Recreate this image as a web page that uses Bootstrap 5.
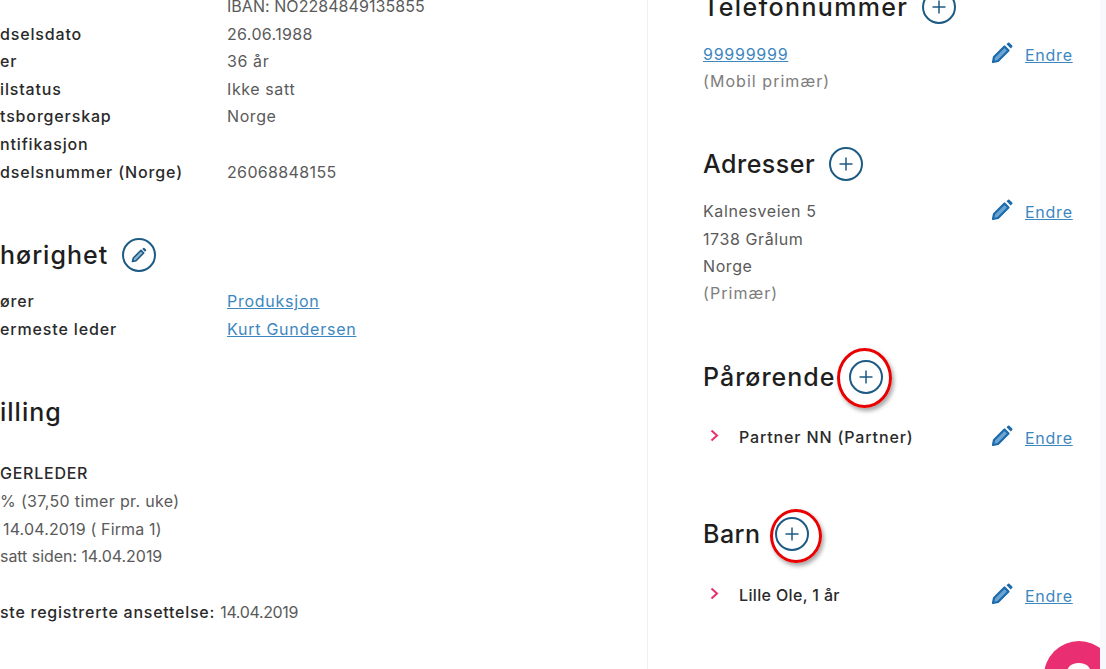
<!DOCTYPE html>
<html lang="no">
<head>
<meta charset="utf-8">
<title>Ansatt</title>
<link href="https://cdn.jsdelivr.net/npm/bootstrap@5.3.0/dist/css/bootstrap.min.css" rel="stylesheet">
<style>
html,body{height:100%;overflow:hidden;background:#fff}
body{font-family:Inter,"Open Sans",sans-serif;font-size:16px;line-height:27.6px;color:#5a5a5a;letter-spacing:.6px}
.stage{height:669px;overflow:hidden}
.pane-left{width:648px;border-right:1px solid #f0f0f0;margin-top:-7px}
.pane-right{width:452px;padding-left:55px;padding-right:27px;margin-top:-13px}
.edge-strip{width:6px;background:#f6f8fb;z-index:3}
.lbl{width:227px;color:#2a2a2a;font-weight:500;flex:none;letter-spacing:.85px}
.head-row{display:flex;align-items:center;gap:14px}
.sec-title{font-size:25px;line-height:40px;font-weight:500;color:#1e1e1e;margin:0;letter-spacing:1px}
.title-wide{letter-spacing:1.35px}
.title-snug{letter-spacing:.5px}
.sec-gap{margin-top:49px}
.gap-s{margin-top:14px}
.gap-k{margin-top:13px}
.gap-m{margin-top:27px}
.gap-n{margin-top:28px}
.gap-l{margin-top:62px}
.strong-line{color:#2a2a2a;font-weight:500;letter-spacing:.75px}
.ind{padding-left:3px}
.num{letter-spacing:.35px}
.tight{letter-spacing:.05px}
.tight-a{letter-spacing:.15px}
.tight-b{letter-spacing:-.05px}
.nar{letter-spacing:-.35px}
.lnk{color:#3d87bf;text-decoration:underline;letter-spacing:.75px}
.muted-line{color:#7d7d7d;letter-spacing:1.05px;margin-top:-1px}
.round-ic{width:34px;height:34px;flex:none;display:block}
.ring-host{position:relative;display:block;flex:none}
.ring{position:absolute;border:3px solid #e90000;border-radius:50%;box-shadow:2px 3px 4px rgba(0,0,0,.35)}
.ring-a{width:55px;height:60px;left:-12px;top:-12px}
.ring-b{width:52px;height:54px;left:-5px;top:-8px}
.edit-col{width:82px;flex:none;display:flex;align-items:flex-start;gap:12px;padding-top:1px}
.edit-col svg{width:22px;height:22px;flex:none}
.chev{width:9px;height:13px;margin:5px 20px 0 7px;flex:none}
.dep-name{color:#2a2a2a;font-weight:500;letter-spacing:.85px}
.dep-short{letter-spacing:.35px}
.fab{position:absolute;left:1044px;top:641px;width:70px;height:70px;border-radius:50%;background:#e92f72;color:#fff;font-weight:700;font-size:50px;line-height:80px;text-align:center;z-index:2;letter-spacing:0}
</style>
</head>
<body>
<svg width="0" height="0" class="position-absolute">
  <defs>
    <symbol id="pen" viewBox="0 0 22 22"><path d="M2 20l1-5L13.500 4.500l4 4L7 19z" fill="#6ba4d2" stroke="#1a6aac" stroke-width="2.200" stroke-linejoin="round"/><path d="M15.500 2.200 17 .8a1 1 0 0 1 1.400 0l2.800 2.800a1 1 0 0 1 0 1.400L19.800 6.500z" fill="#1a6aac"/></symbol>
    <symbol id="plus" viewBox="0 0 34 34"><circle cx="17" cy="17" r="16" fill="none" stroke="#1d5b84" stroke-width="2"/><path d="M17 10.500v13M10.500 17h13" stroke="#1d5b84" stroke-width="1.500" fill="none"/></symbol>
    <symbol id="penring" viewBox="0 0 34 34"><circle cx="17" cy="17" r="16" fill="none" stroke="#1d5b84" stroke-width="2"/><path d="M10.500 23.500l.8-3.500 7.700-7.700 2.700 2.700-7.700 7.700z" fill="#8fb3cc" stroke="#1d5b84" stroke-width="1.600" stroke-linejoin="round"/><path d="M20.300 11 21.300 10a.8.8 0 0 1 1.100 0l1.600 1.600a.8.8 0 0 1 0 1.100l-1 1z" fill="#1d5b84"/></symbol>
  </defs>
</svg>
<div class="stage d-flex position-relative">
  <main class="pane-left">
    <div class="d-flex"><span class="lbl"></span><span class="tight">IBAN: NO2284849135855</span></div>
    <div class="d-flex"><span class="lbl">dselsdato</span><span class="num">26.06.1988</span></div>
    <div class="d-flex"><span class="lbl">er</span><span>36 år</span></div>
    <div class="d-flex"><span class="lbl">ilstatus</span><span>Ikke satt</span></div>
    <div class="d-flex"><span class="lbl">tsborgerskap</span><span>Norge</span></div>
    <div class="d-flex"><span class="lbl">ntifikasjon</span></div>
    <div class="d-flex"><span class="lbl">dselsnummer (Norge)</span><span class="num">26068848155</span></div>

    <div class="head-row sec-gap">
      <h2 class="sec-title">hørighet</h2>
      <svg class="round-ic"><use href="#penring"/></svg>
    </div>
    <div class="d-flex gap-k"><span class="lbl">ører</span><a class="lnk" href="#">Produksjon</a></div>
    <div class="d-flex"><span class="lbl">ermeste leder</span><a class="lnk" href="#">Kurt Gundersen</a></div>

    <div class="sec-gap"><h2 class="sec-title">illing</h2></div>
    <div class="gap-n">
      <div class="strong-line">GERLEDER</div>
      <div class="num">% (37,50 timer pr. uke)</div>
      <div class="ind tight-a">14.04.2019 ( Firma 1)</div>
      <div class="tight-b">satt siden: 14.04.2019</div>
    </div>
    <div class="mt-4 pt-1"><span class="strong-line">ste registrerte ansettelse:</span> <span class="nar">14.04.2019</span></div>
  </main>

  <aside class="pane-right">
    <div class="head-row">
      <h2 class="sec-title title-wide">Telefonnummer</h2>
      <svg class="round-ic"><use href="#plus"/></svg>
    </div>
    <div class="d-flex justify-content-between gap-s">
      <div><a class="lnk num" href="#">99999999</a><div class="muted-line">(Mobil primær)</div></div>
      <div class="edit-col"><svg><use href="#pen"/></svg><a class="lnk" href="#">Endre</a></div>
    </div>

    <div class="head-row sec-gap">
      <h2 class="sec-title title-snug">Adresser</h2>
      <svg class="round-ic"><use href="#plus"/></svg>
    </div>
    <div class="d-flex justify-content-between gap-s">
      <div>Kalnesveien 5<br>1738 Grålum<br>Norge<div class="muted-line">(Primær)</div></div>
      <div class="edit-col"><svg><use href="#pen"/></svg><a class="lnk" href="#">Endre</a></div>
    </div>

    <div class="head-row sec-gap">
      <h2 class="sec-title">Pårørende</h2>
      <span class="ring-host"><svg class="round-ic"><use href="#plus"/></svg><span class="ring ring-a"></span></span>
    </div>
    <div class="d-flex justify-content-between gap-m">
      <div class="d-flex"><svg class="chev" viewBox="0 0 9 13"><path d="M1.500 1.500 7 6.500l-5.500 5" fill="none" stroke="#e92f72" stroke-width="2"/></svg><span class="dep-name">Partner NN (Partner)</span></div>
      <div class="edit-col"><svg><use href="#pen"/></svg><a class="lnk" href="#">Endre</a></div>
    </div>

    <div class="head-row gap-l">
      <h2 class="sec-title title-snug">Barn</h2>
      <span class="ring-host"><svg class="round-ic"><use href="#plus"/></svg><span class="ring ring-b"></span></span>
    </div>
    <div class="d-flex justify-content-between gap-n">
      <div class="d-flex"><svg class="chev" viewBox="0 0 9 13"><path d="M1.500 1.500 7 6.500l-5.500 5" fill="none" stroke="#e92f72" stroke-width="2"/></svg><span class="dep-name dep-short">Lille Ole, 1 år</span></div>
      <div class="edit-col"><svg><use href="#pen"/></svg><a class="lnk" href="#">Endre</a></div>
    </div>
  </aside>
  <div class="edge-strip"></div>
  <div class="fab">?</div>
</div>
<script src="https://cdn.jsdelivr.net/npm/bootstrap@5.3.0/dist/js/bootstrap.bundle.min.js"></script>
</body>
</html>
